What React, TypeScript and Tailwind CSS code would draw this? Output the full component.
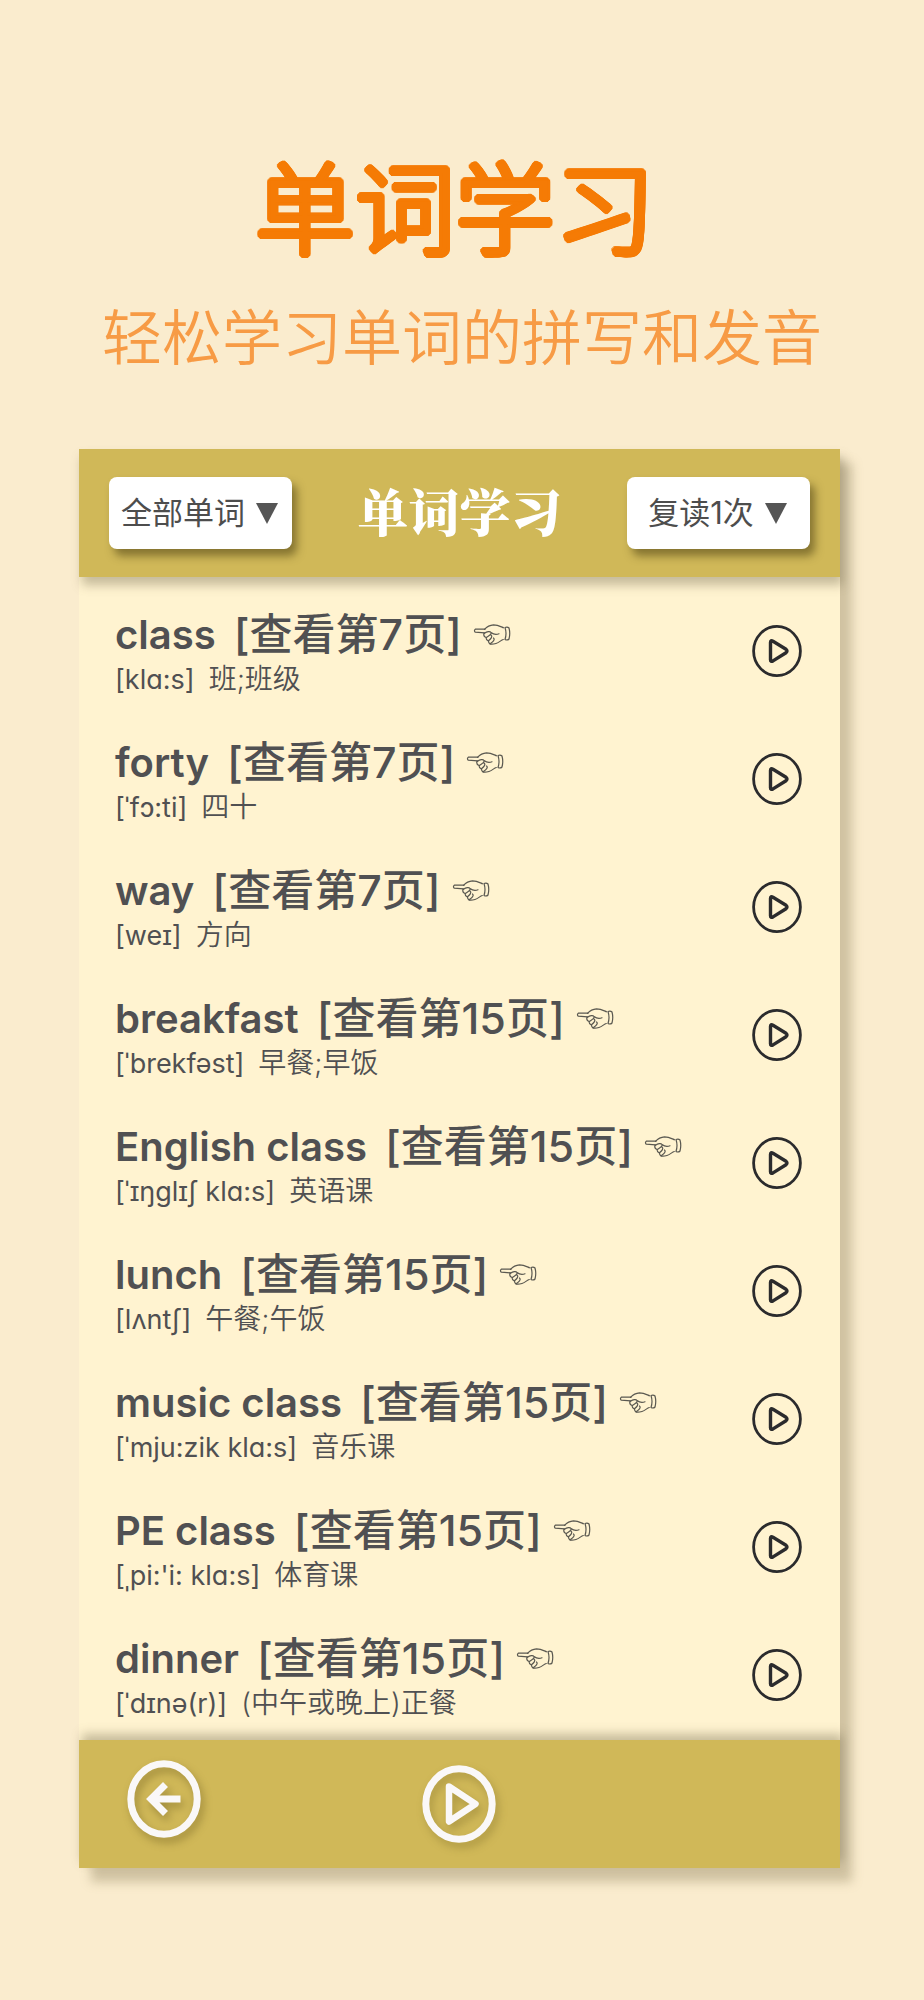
import React from "react";

type Word = { word: string; page: number; phonetic: string; meaning: string };

const words: Word[] = [
  { word: "class", page: 7, phonetic: "[klɑ:s]", meaning: "班;班级" },
  { word: "forty", page: 7, phonetic: "[ˈfɔ:ti]", meaning: "四十" },
  { word: "way", page: 7, phonetic: "[weɪ]", meaning: "方向" },
  { word: "breakfast", page: 15, phonetic: "[ˈbrekfəst]", meaning: "早餐;早饭" },
  { word: "English class", page: 15, phonetic: "[ˈɪŋglɪʃ klɑ:s]", meaning: "英语课" },
  { word: "lunch", page: 15, phonetic: "[lʌntʃ]", meaning: "午餐;午饭" },
  { word: "music class", page: 15, phonetic: "[ˈmju:zik klɑ:s]", meaning: "音乐课" },
  { word: "PE class", page: 15, phonetic: "[ˌpi:'i: klɑ:s]", meaning: "体育课" },
  { word: "dinner", page: 15, phonetic: "[ˈdɪnə(r)]", meaning: "(中午或晚上)正餐" },
];

function PlayIcon() {
  return (
    <svg width="50" height="52" viewBox="0 0 50 52" fill="none" stroke="#2b2b2d" aria-hidden="true">
      <ellipse cx="25" cy="26" rx="23.4" ry="24.6" strokeWidth="2.8" />
      <path d="M18.500 17.500Q18.500 14.800 21 16.300L34 24.300Q36 26 34 27.700L21 35.900Q18.500 37.200 18.500 34.700Z" strokeWidth="3.400" strokeLinejoin="round" />
    </svg>
  );
}

function HandIcon() {
  return (
    <svg width="38" height="21" viewBox="0 0 38 21" fill="none" stroke="#5a5850" strokeWidth="1.2" strokeLinecap="round" strokeLinejoin="round" aria-hidden="true">
      <path d="M12 5.2L2.3 5.2Q.6 6.6 2.3 8.2L11.5 8.9" />
      <path d="M11.5 5.4C14 2.6 17 1 20.5 .8C24.5 .8 27.5 2.5 30.5 3.8" />
      <path d="M30.3 15.5C28 16 26.500 18.500 23 19.500C20 20.300 17.500 20.500 16.500 19.500" />
      <path d="M11 9C10.500 11 11 13 13 13.500C13 16 14.500 16.500 15.500 17C15.500 18.500 16 19.500 17 19.800" />
      <path d="M11.500 9.300C14 7.500 17 7 18 8.500C19 10.500 16 11.500 13.300 13.400M18 11C20 12.500 18 14.500 15.500 16.800M20.500 14C22.500 15.500 20 17.500 17.500 19.500M18 8.500C20.500 10.500 23 11 26 9.800" />
      <path d="M32 3.500Q34.500 2.500 36 4Q37.500 9.500 36 15Q34.500 16.700 32 15.500Q34 9.500 32 3.500Z" />
    </svg>
  );
}

function Picker({ label, value }: { label: string; value: string }) {
  return (
    <label className="flex h-[72px] w-[183px] items-center justify-center gap-[11px] rounded-lg bg-white pr-0.5 shadow-[5px_7px_9px_rgba(60,50,10,0.5)]">
      <select
        aria-label={label}
        className="h-full appearance-none bg-transparent p-0 text-[31px] text-[#4d4d4d] [field-sizing:content]"
      >
        <option>{value}</option>
      </select>
      <svg width="22" height="21" viewBox="0 0 22 21" fill="#555" aria-hidden="true">
        <path d="M0 0H22L11 21Z" />
      </svg>
    </label>
  );
}

export default function App() {
  return (
    <main className="min-h-screen bg-[#faecce] pt-[132px] pb-[131px] font-['Inter','Noto_Sans_CJK_SC',sans-serif] text-[#505052]">
      <h1 className="pr-[14px] text-center font-['Noto_Sans_CJK_SC',sans-serif] text-[100px] leading-[144px] font-light text-[#f57b05] [text-shadow:3px_0_#f57b05,-3px_0_#f57b05,0_3px_#f57b05,0_-3px_#f57b05,2px_2px_#f57b05,-2px_2px_#f57b05,2px_-2px_#f57b05,-2px_-2px_#f57b05,3px_1px_#f57b05,-3px_1px_#f57b05,3px_-1px_#f57b05,-3px_-1px_#f57b05,1px_3px_#f57b05,-1px_3px_#f57b05,1px_-3px_#f57b05,-1px_-3px_#f57b05]">
        单词学习
      </h1>
      <p className="mt-[20px] text-center font-['Noto_Sans_CJK_SC',sans-serif] text-[60px] leading-[76px] font-[350] text-[#f79b45]">
        轻松学习单词的拼写和发音
      </p>

      <section className="mt-[77px] mr-[84px] ml-[79px] bg-[#fff3d0] shadow-[12px_14px_10px_rgba(140,125,90,0.38)]">
        <header className="relative flex h-32 items-center justify-between bg-[#d0b858] px-[30px] shadow-[3px_8px_10px_rgba(120,110,80,0.42)]">
          <Picker label="单词范围" value="全部单词" />
          <h2 className="mb-1.5 font-['Noto_Serif_CJK_SC','Noto_Sans_CJK_SC',serif] text-[51px] leading-[60px] font-black text-white">单词学习</h2>
          <Picker label="复读次数" value="复读1次" />
        </header>

        <ul className="pt-[10px] pb-px">
          {words.map((w) => (
            <li key={w.word} className="flex h-32 items-center justify-between pr-[38px] pl-[36px]">
              <div className="pt-1">
                <div className="flex items-center text-[40px] leading-[53px] font-semibold">
                  <span className="whitespace-pre">{w.word}</span>
                  <a href={`#page-${w.page}`} className="ml-[18px] flex items-center gap-[11px] font-medium whitespace-nowrap">
                    <span className="text-[43px]">[查看第{w.page}页]</span>
                    <HandIcon />
                  </a>
                </div>
                <div className="flex items-baseline gap-[14px] text-[27px] leading-[37px]">
                  <span>{w.phonetic}</span>
                  <span className="text-[28px] font-[350]">{w.meaning}</span>
                </div>
              </div>
              <button type="button" aria-label={`播放 ${w.word}`}>
                <PlayIcon />
              </button>
            </li>
          ))}
        </ul>

        <footer className="relative grid h-32 grid-cols-3 items-center bg-[#d0b858] shadow-[3px_-6px_10px_rgba(120,110,80,0.42)]">
          <button type="button" aria-label="返回" className="mb-[10px] ml-[48px] justify-self-start drop-shadow-[3px_5px_4px_rgba(90,75,20,0.4)]">
            <svg width="74" height="78" viewBox="0 0 74 78" fill="none" stroke="#faf8f8" strokeWidth="7" aria-hidden="true">
              <ellipse cx="37" cy="39" rx="33.200" ry="35.200" />
              <path d="M53.500 39H24M38.500 24.500L24 39L38.500 53.500" />
            </svg>
          </button>
          <button type="button" aria-label="播放全部" className="justify-self-center drop-shadow-[3px_5px_4px_rgba(90,75,20,0.3)]">
            <svg width="74" height="78" viewBox="0 0 74 78" fill="none" stroke="#faf8f8" strokeWidth="7" aria-hidden="true">
              <ellipse cx="37" cy="39" rx="33.200" ry="35.200" />
              <path d="M27 21.500L53.500 39L27 56.500Z" strokeWidth="6.500" strokeLinejoin="round" />
            </svg>
          </button>
        </footer>
      </section>
    </main>
  );
}
